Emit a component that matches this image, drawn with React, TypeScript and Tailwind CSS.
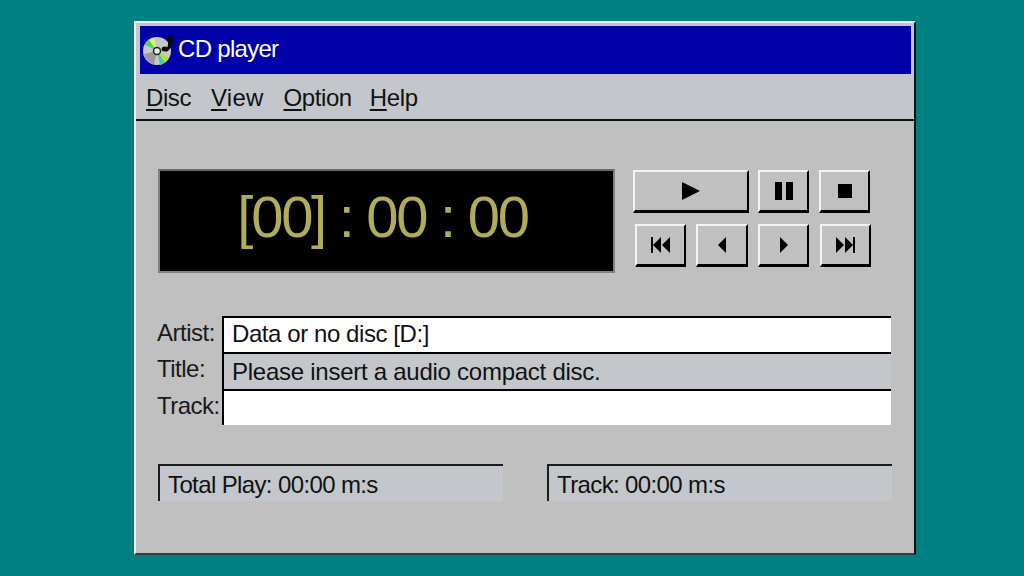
import React from 'react';

const sans = { fontFamily: '"Liberation Sans", Arial, sans-serif' };

function CdIcon() {
  return (
    <svg width="32" height="32" viewBox="0 0 32 32" className="shrink-0">
      <circle cx="14" cy="17" r="14" fill="#c8c8c8" />
      <path d="M14 17 L2 11 A14 14 0 0 1 9 4 Z" fill="#4fd46a" />
      <path d="M14 17 L6 6 A14 14 0 0 1 11 3.5 Z" fill="#e4ee68" />
      <path d="M14 17 L26 24 A14 14 0 0 1 19 30 Z" fill="#b8e040" />
      <path d="M14 17 L22 28.5 A14 14 0 0 1 17 31 Z" fill="#40d0a0" />
      <path d="M1 20 A14 14 0 0 0 11 30.5 L14 17 Z" fill="#9a9a9a" />
      <circle cx="14" cy="17" r="3.5" fill="#e8e8e8" stroke="#222" strokeWidth="1.5" />
      <path d="M24 3 C27 0 31 2 30 7 C29 12 27 16 23 18 C25 13 26 8 24 3 Z" fill="#0a0a0a" />
      <ellipse cx="22" cy="15" rx="3.5" ry="2.5" fill="#0a0a0a" />
    </svg>
  );
}

function Glyph({ w, h, children }: { w: number; h: number; children: React.ReactNode }) {
  return (
    <svg width={w} height={h} viewBox={`0 0 ${w} ${h}`} fill="#000">
      {children}
    </svg>
  );
}

function BevelButton({ className, children }: { className: string; children: React.ReactNode }) {
  return (
    <button className={`flex h-[43px] items-center justify-center border-t-2 border-l-2 border-r-2 border-b-[3px] border-t-[#f4f4f4] border-l-[#f4f4f4] border-r-black border-b-black bg-[#c0c0c0] ${className}`}>
      {children}
    </button>
  );
}

function InfoRow({ label, value, height, field }: { label: string; value?: string; height: string; field: string }) {
  return (
    <div className={`flex items-stretch ${height}`}>
      <div className="w-[65px] shrink-0 pt-[1px] text-[24px] leading-[32px] tracking-[-0.5px] text-[#1a1a1a]">{label}</div>
      <div className={`flex-1 border-t-2 border-l-2 border-black pl-[8px] text-[24px] text-[#111] ${field}`}>
        {value}
      </div>
    </div>
  );
}

function StatusBox({ text }: { text: string }) {
  return (
    <div className="h-[37px] w-[345px] border-t-2 border-l-2 border-[#1c1c1c] bg-[#c3c7cb] pl-[8px] text-[24px] leading-[37px] tracking-[-0.62px] text-[#111]">
      {text}
    </div>
  );
}

export default function App() {
  return (
    <div className="h-[576px] w-[1024px] overflow-hidden bg-[#008080] pt-[21px] pl-[134px]" style={sans}>
      <div className="flex h-[534px] w-[782px] flex-col border-2 border-t-[#f4f4f4] border-l-[#f4f4f4] border-r-[#111] border-b-[#3a3a3a] bg-[#c0c0c0]">
        <div className="bg-[#c3c7cb] pt-[3px] pl-[4px] pr-[3px]">
          <div className="flex h-[48px] items-center gap-[3px] bg-[#0000a8] pl-[3px]">
            <CdIcon />
            <span className="pb-[2px] text-[24px] tracking-[-0.7px] text-white">CD player</span>
          </div>
        </div>
        <div className="flex h-[47px] items-center gap-[20px] border-b-2 border-[#111] bg-[#c3c7cb] pl-[10px] pt-[3px] text-[24px] tracking-[-0.4px] text-[#111]">
          <span><span className="underline decoration-2 underline-offset-[3px]">D</span>isc</span>
          <span className="tracking-[0.2px]"><span className="underline decoration-2 underline-offset-[3px]">V</span>iew</span>
          <span><span className="underline decoration-2 underline-offset-[3px]">O</span>ption</span>
          <span className="-ml-[2px]"><span className="underline decoration-2 underline-offset-[3px]">H</span>elp</span>
        </div>

        <div className="flex flex-1 flex-col px-[22px] pt-[48px]">
          <div className="flex">
            <div className="flex h-[104px] w-[457px] items-center justify-center border-2 border-t-[#6a6a6a] border-l-[#808080] border-r-[#808080] border-b-[#808080] bg-black pb-[8px] pr-[8px] text-[58px] leading-none tracking-[-2.3px] text-[#b0ac58]">
              [00] : 00 : 00
            </div>
            <div className="ml-[18px] pt-[1px]">
              <div className="flex">
                <BevelButton className="w-[116px]">
                  <Glyph w={18} h={18}><path d="M0 0 L18 9 L0 18 Z" /></Glyph>
                </BevelButton>
                <BevelButton className="ml-[9px] w-[51px]">
                  <Glyph w={18} h={18}><path d="M0 0 H7 V18 H0 Z M11 0 H18 V18 H11 Z" /></Glyph>
                </BevelButton>
                <BevelButton className="ml-[10px] w-[51px]">
                  <Glyph w={14} h={14}><path d="M0 0 H14 V14 H0 Z" /></Glyph>
                </BevelButton>
              </div>
              <div className="mt-[11px] ml-[2px] flex">
                <BevelButton className="w-[51px]">
                  <Glyph w={19} h={16}><path d="M0 0 H2 V16 H0 Z M2 8 L10 0 V16 Z M11 8 L19 0 V16 Z" /></Glyph>
                </BevelButton>
                <BevelButton className="ml-[10px] w-[52px]">
                  <Glyph w={8} h={16}><path d="M8 0 V16 L0 8 Z" /></Glyph>
                </BevelButton>
                <BevelButton className="ml-[10px] w-[51px]">
                  <Glyph w={8} h={16}><path d="M0 0 V16 L8 8 Z" /></Glyph>
                </BevelButton>
                <BevelButton className="ml-[11px] w-[51px]">
                  <Glyph w={19} h={16}><path d="M0 0 L8 8 L0 16 Z M9 0 L17 8 L9 16 Z M17 0 H19 V16 H17 Z" /></Glyph>
                </BevelButton>
              </div>
            </div>
          </div>

          <div className="mt-[43px] -ml-[1px] mr-[1px]">
            <InfoRow label="Artist:" value="Data or no disc [D:]" height="h-[36px]" field="bg-white leading-[32px] tracking-[-0.42px]" />
            <InfoRow label="Title:" value="Please insert a audio compact disc." height="h-[37px]" field="bg-[#c3c7cb] leading-[36px] tracking-[-0.26px]" />
            <InfoRow label="Track:" height="h-[36px]" field="bg-white" />
          </div>

          <div className="mt-[39px] flex justify-between">
            <StatusBox text="Total Play: 00:00 m:s" />
            <StatusBox text="Track: 00:00 m:s" />
          </div>
        </div>
      </div>
    </div>
  );
}
